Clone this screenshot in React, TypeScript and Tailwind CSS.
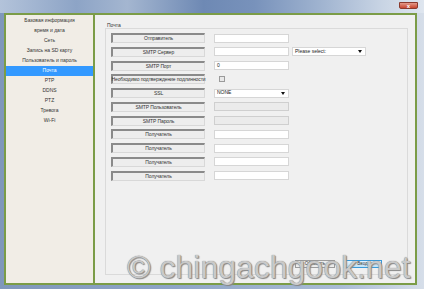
import React from 'react';

const menu = [
  'Базовая информация',
  'время и дата',
  'Сеть',
  'Запись на SD карту',
  'Пользователь и пароль',
  'Почта',
  'PTP',
  'DDNS',
  'PTZ',
  'Тревога',
  'Wi-Fi',
];

type Row = { label: string; kind: 'input' | 'disabled' | 'check' | 'select'; value?: string; extra?: boolean };

const rows: Row[] = [
  { label: 'Отправитель', kind: 'input' },
  { label: 'SMTP Сервер', kind: 'input', extra: true },
  { label: 'SMTP Порт', kind: 'input', value: '0' },
  { label: 'Необходимо подтверждение подлинности', kind: 'check' },
  { label: 'SSL', kind: 'select', value: 'NONE' },
  { label: 'SMTP Пользователь', kind: 'disabled' },
  { label: 'SMTP Пароль', kind: 'disabled' },
  { label: 'Получатель', kind: 'input' },
  { label: 'Получатель', kind: 'input' },
  { label: 'Получатель', kind: 'input' },
  { label: 'Получатель', kind: 'input' },
];

const Arrow = () => (
  <svg width="4" height="3" viewBox="0 0 4 3" className="shrink-0">
    <path d="M0 0h4L2 3z" fill="#111" />
  </svg>
);

const Field: React.FC<{ row: Row }> = ({ row }) => {
  if (row.kind === 'check') {
    return (
      <div className="flex h-full w-[75px] items-center pl-[5px]">
        <div className="h-[6px] w-[6px] border border-[#9a9a9a] bg-[#e8e8e8]" />
      </div>
    );
  }
  if (row.kind === 'select') {
    return (
      <div className="flex h-[9px] w-[75px] items-center justify-between border border-[#d6d6d6] bg-white pl-[2px] pr-[3px] text-[5px] text-[#222]">
        <span>{row.value}</span>
        <Arrow />
      </div>
    );
  }
  return (
    <div
      className={
        row.kind === 'disabled'
          ? 'flex h-[9px] w-[75px] items-center border border-[#cfcfcf] bg-[#ebebeb]'
          : 'flex h-[9px] w-[75px] items-center border border-[#d6d6d6] bg-white pl-[2px] text-[5px] text-[#222]'
      }
    >
      {row.value}
    </div>
  );
};

export default function App() {
  return (
    <div className="relative h-[292px] w-[424px] overflow-hidden bg-white font-['Liberation_Sans',Arial,sans-serif]">
      <div className="flex h-[289px] flex-col bg-[linear-gradient(90deg,#7f97bb_0%,#8ea4c6_40%,#a9bbd5_80%,#d6dee9_100%)]">
        {/* title bar */}
        <div className="flex h-[13px] shrink-0 items-start justify-end bg-[linear-gradient(90deg,#b3c3da_0%,#8da4c6_18%,#a4b6d0_30%,#6e89b4_48%,#7892bb_60%,#9eb2cf_75%,#c8d4e4_90%,#dfe6ef_100%)] pr-[6px] pt-[2px]">
          <div className="flex h-[7px] w-[19px] items-center justify-center rounded-b-[2px] border border-[#8b3a2e] bg-[linear-gradient(#e49a8a,#c8452f)]">
            <span className="text-[6px] leading-none font-bold text-white">x</span>
          </div>
        </div>

        <div className="flex h-[272px] pl-[4px] pr-[7px]">
          {/* left menu */}
          <div className="w-[91px] border-2 border-[#7b9c47] bg-[#f1ede6] pt-px">
            {menu.map((m) => (
              <div
                key={m}
                className={
                  m === 'Почта'
                    ? 'flex h-[10px] items-center justify-center bg-[#3399ff] text-[5px] text-white'
                    : 'flex h-[10px] items-center justify-center text-[5px] text-[#333]'
                }
              >
                {m}
              </div>
            ))}
          </div>

          {/* content */}
          <div className="flex w-[322px] flex-col border-y-2 border-r-2 border-[#7b9c47] bg-[#f0f0f0] pl-[10px] pr-[7px] pb-[8px]">
            <div className="h-[13px] pl-[2px] pt-[8px] text-[5px] leading-none text-[#333]">Почта</div>
            <div className="flex flex-1 flex-col border border-[#dadada] pl-[5px] pr-[25px] pt-[4px] pb-[6px]">
              <div className="flex flex-col gap-[3.75px]">
                {rows.map((r, i) => (
                  <div key={i} className="flex h-[10px] items-center gap-[9px]">
                    <div className="flex h-[10px] w-[94px] items-center justify-center border-t-2 border-l-2 border-r border-b border-t-[#8a8a8a] border-l-[#8a8a8a] border-r-[#d8d8d8] border-b-[#d8d8d8] bg-[#ededed] text-[5px] leading-none tracking-[-0.1px] whitespace-nowrap text-[#333]">
                      {r.label}
                    </div>
                    <Field row={r} />
                    {r.extra && (
                      <div className="-ml-[6px] flex h-[9px] w-[74px] items-center justify-between border border-[#d6d6d6] bg-white pl-[2px] pr-[3px] text-[5px] text-[#222]">
                        <span>Please select:</span>
                        <Arrow />
                      </div>
                    )}
                  </div>
                ))}
              </div>
              <div className="mt-auto flex justify-end gap-[8px]">
                <div className="flex h-[8px] w-[40px] items-center justify-center border border-[#9c9c9c] bg-[#ececec] text-[4.5px] text-[#333]">
                  Обновить
                </div>
                <div className="flex h-[8px] w-[39px] items-center justify-center border border-[#3c9ad8] bg-[linear-gradient(#e6f4fd,#bfe3f8)] text-[4.5px] text-[#333]">
                  Ввод
                </div>
              </div>
            </div>
          </div>
        </div>
      </div>

      {/* watermark */}
      <div className="absolute left-[127px] top-[251px] text-[32px] leading-[32px] whitespace-nowrap text-[#c9c9c9] [text-shadow:0_0_1px_#6e6e6e,1px_1px_1px_#8a8a8a]">
        © chingachgook.net
      </div>
    </div>
  );
}
